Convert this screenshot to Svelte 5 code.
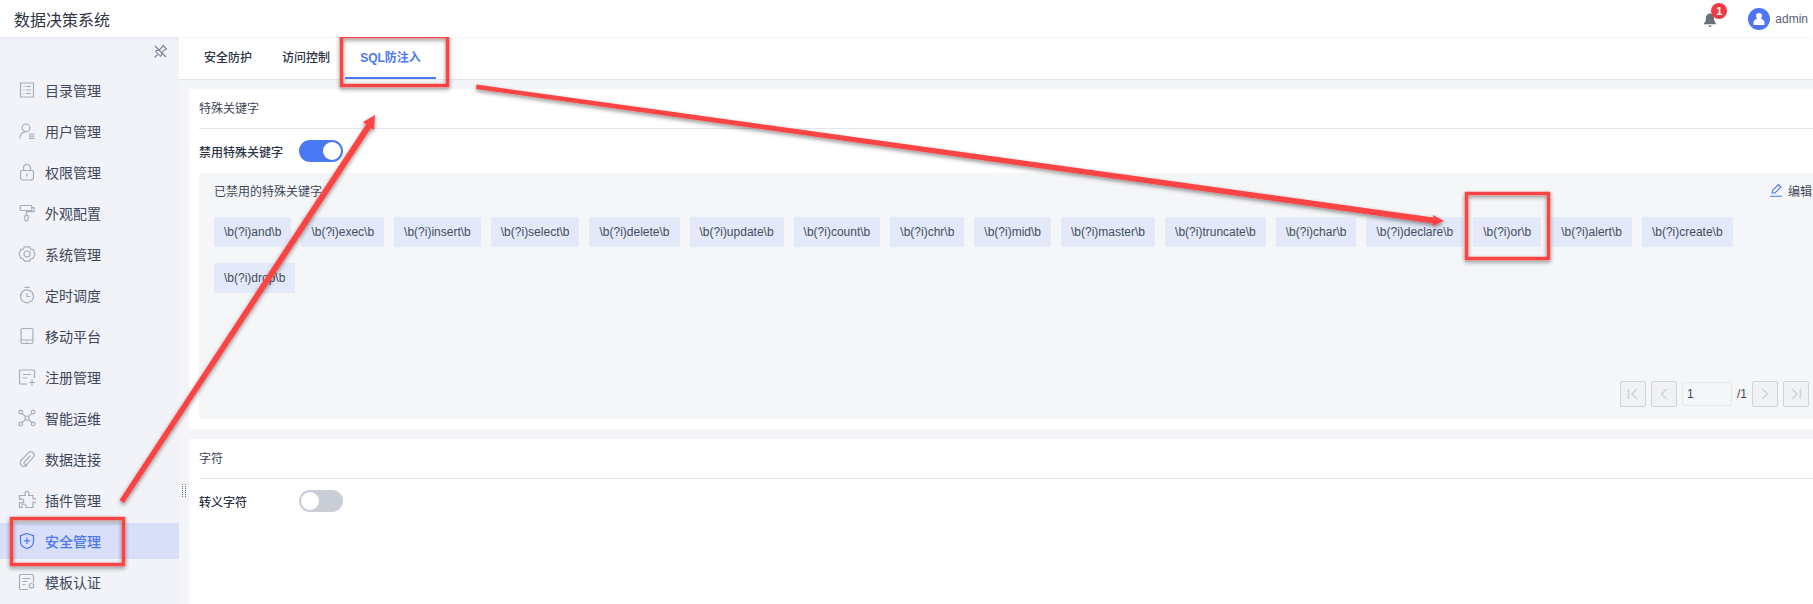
<script>
  const menu = [
    { label: '目录管理', icon: 'catalog' },
    { label: '用户管理', icon: 'user' },
    { label: '权限管理', icon: 'lock' },
    { label: '外观配置', icon: 'roller' },
    { label: '系统管理', icon: 'gear' },
    { label: '定时调度', icon: 'timer' },
    { label: '移动平台', icon: 'mobile' },
    { label: '注册管理', icon: 'register' },
    { label: '智能运维', icon: 'nodes' },
    { label: '数据连接', icon: 'clip' },
    { label: '插件管理', icon: 'puzzle' },
    { label: '安全管理', icon: 'shield', active: true },
    { label: '模板认证', icon: 'template' }
  ];

  const tabs = ['安全防护', '访问控制', 'SQL防注入'];

  const words = ['and', 'exec', 'insert', 'select', 'delete', 'update', 'count', 'chr', 'mid', 'master', 'truncate', 'char', 'declare', 'or', 'alert', 'create', 'drop'];

  const paths = {
    catalog: 'M2.5 2h13v14h-13z M5.5 5.500h1 M8 5.500h5 M5.500 9h1 M8 9h5 M5.500 12.500h1 M8 12.500h5',
    user: 'M8 2a3.800 3.800 0 1 1 0 7.600 3.800 3.800 0 0 1 0-7.600z M2 16.500c0-3.500 2.200-6 5-6.500 M11 12h5.500 M11 14.200h5.500 M11 16.400h5.500',
    lock: 'M4 7.500h10a1.500 1.500 0 0 1 1.500 1.500v5.500a2.500 2.500 0 0 1-2.500 2.500H5a2.500 2.500 0 0 1-2.500-2.500V9A1.500 1.500 0 0 1 4 7.500z M5.500 7.500V5a3.500 3.500 0 0 1 7 0v2.500 M9 10.500v3',
    roller: 'M3 1.500h10a.8.8 0 0 1 .8.8v3.400a.8.8 0 0 1-.8.8H3a.8.8 0 0 1-.8-.8V2.300a.8.8 0 0 1 .8-.8z M13.800 3.500h2.200v4.200H8.500v3.300 M8.500 11a1.700 1.700 0 0 1 1.700 1.700v2.600a1.700 1.700 0 0 1-3.400 0v-2.600A1.700 1.700 0 0 1 8.500 11z',
    gear: 'M6.300 1.800h5.400l.9 2.300 2.500.5L17 9l-1.900 4.400-2.500.5-.9 2.300H6.300l-.9-2.300-2.500-.5L1 9l1.900-4.400 2.500-.5z M9 6a3 3 0 1 1 0 6 3 3 0 0 1 0-6z',
    timer: 'M9 3.800a6.500 6.500 0 1 1 0 13 6.500 6.500 0 0 1 0-13z M6.500 1.300h5 M9 7.200v3.300h3',
    mobile: 'M4.500 1.500h9a1.500 1.500 0 0 1 1.500 1.500v12a1.500 1.500 0 0 1-1.500 1.500h-9A1.500 1.500 0 0 1 3 15V3a1.500 1.500 0 0 1 1.500-1.500z M3 13h12 M8.500 14.800h1',
    register: 'M9 16H2.500a1 1 0 0 1-1-1V3a1 1 0 0 1 1-1h13a1 1 0 0 1 1 1v7 M5 6.500h8 M5 10h4 M11 14.500h6 M14 11.500v6',
    nodes: 'M4.500 3a1.800 1.800 0 1 1-3.600 0 1.800 1.800 0 0 1 3.600 0z M17 3a1.800 1.800 0 1 1-3.600 0 1.800 1.800 0 0 1 3.600 0z M4.500 15a1.800 1.800 0 1 1-3.600 0 1.800 1.800 0 0 1 3.600 0z M17 15a1.800 1.800 0 1 1-3.600 0 1.800 1.800 0 0 1 3.600 0z M11 9a2 2 0 1 1-4 0 2 2 0 0 1 4 0z M4 4.300l3.500 3.300 M14 4.300l-3.500 3.300 M4 13.700l3.500-3.300 M14 13.700l-3.500-3.300',
    clip: 'M12.500 5.500l-6 6.500a1.600 1.600 0 0 0 2.400 2.200l6.400-7a3.300 3.300 0 0 0-4.800-4.500L3.500 10c-2.600 3-.4 7 3 6.500 1.200-.2 2.200-.8 3-1.700',
    puzzle: 'M7 2.500a2 2 0 0 1 4 0c0 .8-.4 1.200-.4 2H15v3.500c.8 0 1.200-.4 2-.4a2 2 0 0 1 0 4c-.8 0-1.200-.4-2-.4v5.300H8v-1.500a2 2 0 0 0-4 0v1.500H1.500v-5c1 0 1.500.4 2.200.4a2 2 0 0 0 0-4c-.7 0-1.200.4-2.200.4V4.500h5.900c0-.8-.4-1.200-.4-2z',
    shield: 'M9 1.500l6.500 2.200v6c0 3.300-3 5.800-6.500 6.800-3.500-1-6.500-3.500-6.500-6.800v-6z M5.800 8.800h6.400 M9 5.600v6.400',
    template: 'M10 16.500H2.500a1 1 0 0 1-1-1v-13a1 1 0 0 1 1-1h12a1 1 0 0 1 1 1v7 M4.500 5.500h8 M4.500 8.500h5 M4.500 11.500h3 M13.500 10.500a2.200 2.200 0 1 1 0 4.400 2.200 2.200 0 0 1 0-4.400z'
  };
</script>

<div class="page">
  <header class="topbar">
    <div class="title">数据决策系统</div>
    <div class="top-right">
      <div class="bell">
        <svg width="14" height="16" viewBox="0 0 14 16"><path d="M7 1.500c-2.600 0-4 2-4 4.300 0 3-.8 4.500-2 5.500v1h12v-1c-1.200-1-2-2.500-2-5.500 0-2.300-1.400-4.300-4-4.300z M5.500 13.500h3a1.500 1.500 0 0 1-3 0z" fill="#6b6f76"/></svg>
        <span class="badge">1</span>
      </div>
      <div class="avatar">
        <svg width="14" height="14" viewBox="0 0 14 14"><path d="M7 1a3 3 0 0 1 3 3c0 1.200-.5 2.200-1.300 2.800 2 .6 3.800 1.700 3.800 3.600V13h-11v-2.600c0-1.900 1.800-3 3.800-3.600C4.500 6.200 4 5.200 4 4a3 3 0 0 1 3-3z" fill="#fff"/></svg>
      </div>
      <span class="user">admin</span>
    </div>
  </header>

  <div class="body">
    <aside class="sidebar">
      <div class="pin">
        <svg width="15" height="15" viewBox="0 0 15 15" fill="none" stroke="#7b8190" stroke-width="1.100"><path d="M10 1.500l3.500 3.500-1.800.7-3.200 3.200-.2 2.600-.8.8-5-5 .8-.8 2.600-.2 3.200-3.200z M4.500 10.500L1.500 13.500 M2 2l11 11"/></svg>
      </div>
      <nav>
        {#each menu as item}
          <div class="item" class:active={item.active}>
            <svg class="icon" width="18" height="18" viewBox="0 0 18 18" fill="none" stroke="currentColor" stroke-width="1.200"><path d={paths[item.icon]} /></svg>
            <span>{item.label}</span>
          </div>
        {/each}
      </nav>
      <div class="handle"></div>
    </aside>

    <main class="content">
      <div class="tabs">
        {#each tabs as tab, i}
          <div class="tab" class:current={i === 2}>{tab}</div>
        {/each}
      </div>

      <section class="card first">
        <h3 class="card-title">特殊关键字</h3>
        <div class="row">
          <span class="row-label">禁用特殊关键字</span>
          <span class="switch on"><i></i></span>
        </div>
        <div class="panel">
          <div class="panel-head">
            <span>已禁用的特殊关键字</span>
            <span class="edit">
              <svg width="14" height="14" viewBox="0 0 14 14" fill="none" stroke="#4a78f5" stroke-width="1.100"><path d="M3 10l.5-2.500 6-6 2.500 2.500-6 6z M1 13.200h12"/></svg>
              编辑
            </span>
          </div>
          <div class="tags">
            {#each words as w}
              <span class="tag">\b(?i){w}\b</span>
            {/each}
          </div>
          <div class="pager">
            <span class="pg"><svg width="14" height="14" viewBox="0 0 14 14"><path d="M2.500 2v10 M11 2L6 7l5 5" /></svg></span>
            <span class="pg"><svg width="14" height="14" viewBox="0 0 14 14"><path d="M9.500 2L4.500 7l5 5" /></svg></span>
            <span class="pg-input">1</span>
            <span class="pg-total">/1</span>
            <span class="pg"><svg width="14" height="14" viewBox="0 0 14 14"><path d="M4.500 2l5 5-5 5" /></svg></span>
            <span class="pg"><svg width="14" height="14" viewBox="0 0 14 14"><path d="M11.500 2v10 M3 2l5 5-5 5" /></svg></span>
          </div>
        </div>
      </section>

      <section class="card">
        <h3 class="card-title">字符</h3>
        <div class="row">
          <span class="row-label">转义字符</span>
          <span class="switch"><i></i></span>
        </div>
      </section>
    </main>
  </div>

  <!-- red annotations drawn on top of the screenshot -->
  <svg class="marks" width="1813" height="604" viewBox="0 0 1813 604" fill="none">
    <defs>
      <filter id="sh" x="-10%" y="-10%" width="120%" height="120%">
        <feDropShadow dx="0" dy="2" stdDeviation="2" flood-color="#000" flood-opacity="0.45" />
      </filter>
    </defs>
    <g filter="url(#sh)">
      <g stroke="#fb4545" stroke-width="3.500">
        <rect x="11.500" y="518.500" width="112" height="46" />
        <rect x="341.500" y="36.500" width="106" height="49" />
        <rect x="1466.500" y="193.500" width="82" height="65" />
      </g>
      <!-- arrows get thicker toward the head -->
      <path d="M119.500 500L124 503L371 128L374 130L375 115L363 122L366 124.500Z" fill="#fb4545" />
      <path d="M476.500 84.500L476 89L1433 223.500L1433 226L1444 221L1433 215L1433.500 217.500Z" fill="#fb4545" />
    </g>
  </svg>
</div>

<style>
  :global(body) {
    margin: 0;
    overflow: hidden;
  }
  .page {
    position: relative;
    width: 1813px;
    height: 604px;
    overflow: hidden;
    display: flex;
    flex-direction: column;
    font-family: "Liberation Sans", "Noto Sans CJK SC", sans-serif;
    font-size: 12px;
    color: #333c4f;
    background: #fff;
  }
  .topbar {
    height: 37px;
    flex: none;
    display: flex;
    align-items: center;
    justify-content: space-between;
    padding: 0 5px 0 14px;
    background: #fff;
    box-shadow: 0 1px 4px rgba(40, 50, 80, 0.06);
    position: relative;
    z-index: 1;
  }
  .title {
    font-size: 16px;
    color: #2f3440;
  }
  .top-right {
    display: flex;
    align-items: center;
  }
  .bell {
    position: relative;
    display: flex;
    margin-right: 31px;
    margin-top: 2px;
  }
  .badge {
    position: absolute;
    left: 8px;
    top: -9px;
    width: 16px;
    height: 16px;
    border-radius: 50%;
    background: #ee3a43;
    color: #fff;
    font-size: 11px;
    font-weight: bold;
    line-height: 16px;
    text-align: center;
  }
  .avatar {
    width: 22px;
    height: 22px;
    border-radius: 50%;
    background: #4f74f7;
    display: flex;
    align-items: center;
    justify-content: center;
    margin-right: 5px;
  }
  .user {
    color: #5a6070;
  }
  .body {
    flex: 1;
    display: flex;
    min-height: 0;
  }
  .sidebar {
    width: 179px;
    flex: none;
    position: relative;
    background: #f1f3f8;
    padding-top: 35px;
    box-sizing: border-box;
  }
  .pin {
    position: absolute;
    top: 7px;
    right: 11px;
    display: flex;
  }
  .item {
    height: 36px;
    margin-bottom: 5px;
    display: flex;
    align-items: center;
    padding-left: 18px;
    gap: 9px;
    font-size: 14px;
    color: #3f475a;
  }
  .item .icon {
    color: #a8adb9;
    flex: none;
  }
  .item.active {
    background: #d9dff9;
    color: #4a78f5;
    font-weight: 500;
  }
  .item.active .icon {
    color: #4a78f5;
  }
  .handle {
    position: absolute;
    right: -7px;
    top: 447px;
    width: 4px;
    height: 13px;
    background-image: radial-gradient(circle at 0.5px 0.5px, #6a7080 0.6px, transparent 0.7px);
    background-size: 3px 2px;
  }
  .content {
    flex: 1;
    min-width: 0;
    background: #f4f5f8;
    display: flex;
    flex-direction: column;
  }
  .tabs {
    height: 42px;
    flex: none;
    display: flex;
    background: #fff;
    border-bottom: 1px solid #e3e5ea;
    padding-left: 15px;
    gap: 10px;
    margin-bottom: 9px;
  }
  .tab {
    padding: 0 10px;
    height: 42px;
    box-sizing: border-box;
    line-height: 42px;
    font-weight: 500;
    color: #2c3344;
  }
  .tab.current {
    width: 91px;
    padding: 0;
    margin-left: -5px;
    text-align: center;
    color: #4a78f5;
    font-weight: bold;
    border-bottom: 2px solid #4a78f5;
  }
  .card {
    margin-left: 10px;
    background: #fff;
    padding: 0 0 0 10px;
    flex: 1;
  }
  .card.first {
    flex: none;
    height: 340px;
    margin-bottom: 10px;
    box-sizing: border-box;
  }
  .card-title {
    margin: 0;
    height: 40px;
    line-height: 40px;
    font-size: 12px;
    font-weight: normal;
    border-bottom: 1px solid #e3e5ea;
    box-sizing: border-box;
    color: #3f475a;
  }
  .row {
    display: flex;
    align-items: center;
    height: 44px;
  }
  .row-label {
    width: 100px;
    font-weight: 500;
    color: #2c3344;
  }
  .switch {
    width: 44px;
    height: 22px;
    border-radius: 11px;
    background: #c9ced6;
    padding: 2px;
    box-sizing: border-box;
    display: flex;
  }
  .switch i {
    width: 18px;
    height: 18px;
    border-radius: 50%;
    background: #fff;
  }
  .switch.on {
    background: #4a78f5;
    justify-content: flex-end;
  }
  .panel {
    background: #f5f6f8;
    height: 246px;
    padding: 0 4px 0 15px;
    position: relative;
    display: flex;
    flex-direction: column;
  }
  .panel-head {
    display: flex;
    justify-content: space-between;
    align-items: center;
    height: 34px;
    color: #3f475a;
  }
  .edit {
    display: flex;
    align-items: center;
    gap: 5px;
    margin-right: -3px;
  }
  .tags {
    display: flex;
    flex-wrap: wrap;
    gap: 16px 10px;
    margin-top: 10px;
  }
  .tag {
    height: 30px;
    line-height: 30px;
    padding: 0 10px;
    background: #e3e9f8;
    border-radius: 2px;
    color: #454d60;
    white-space: nowrap;
  }
  .pager {
    margin-top: auto;
    margin-bottom: 12px;
    display: flex;
    align-items: center;
    justify-content: flex-end;
  }
  .pg {
    width: 26px;
    height: 26px;
    box-sizing: border-box;
    border: 1px solid #d0d3da;
    border-radius: 2px;
    background: #f0f1f5;
    display: flex;
    align-items: center;
    justify-content: center;
    margin-right: 5px;
  }
  .pg:last-child {
    margin-right: 0;
  }
  .pg svg {
    fill: none;
    stroke: #d0d3da;
    stroke-width: 1.500;
  }
  .pg-input {
    width: 50px;
    height: 24px;
    box-sizing: border-box;
    border: 1px solid #e6e8ec;
    border-radius: 2px;
    line-height: 22px;
    padding-left: 4px;
    color: #3f475a;
  }
  .pg-total {
    width: 20px;
    padding-left: 5px;
    box-sizing: border-box;
    color: #3f475a;
  }
  .marks {
    position: absolute;
    left: 0;
    top: 0;
    pointer-events: none;
  }
</style>
